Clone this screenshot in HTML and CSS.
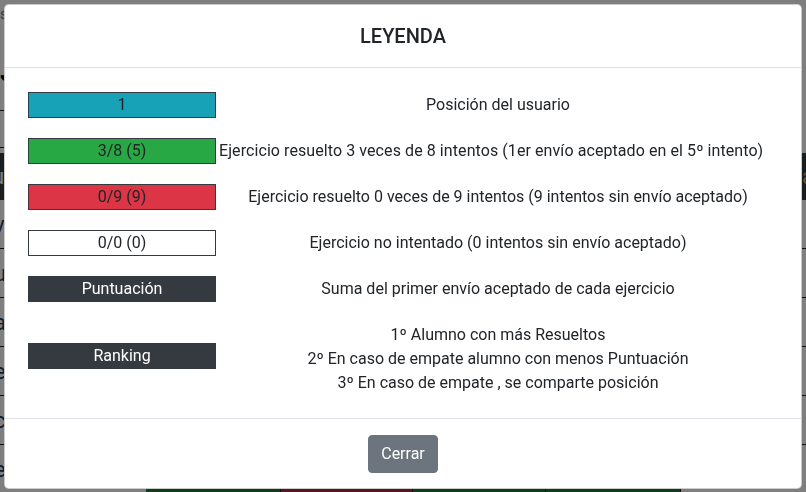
FILE: index.html
```html
<!DOCTYPE html>
<html lang="es">
<head>
<meta charset="utf-8">
<title>Leyenda</title>
<link rel="stylesheet" href="styles.css">
</head>
<body>
<div class="page">
  <div class="page-top">
    <div class="crumb">s</div>
    <div class="page-title">Ju</div>
  </div>
  <div class="short-line"></div>
  <div class="short-line second"></div>
  <div class="thead"><span class="th-l">u</span><span class="th-r">a</span></div>
  <div class="trow"><span>v</span></div>
  <div class="trow"><span>u</span></div>
  <div class="trow"><span>a</span></div>
  <div class="trow"><span>e</span></div>
  <div class="trow"><span>c</span></div>
  <div class="trow"><span>e</span></div>
  <div class="cells">
    <div class="cell c-green"></div>
    <div class="cell c-red"></div>
    <div class="cell c-green"></div>
    <div class="cell c-green"></div>
  </div>
</div>

<div class="backdrop"></div>

<div class="modal">
  <div class="modal-header">
    <h5 class="modal-title">LEYENDA</h5>
  </div>
  <div class="modal-body">
    <div class="legend">
      <div class="box b-info">1</div>
      <div class="desc">Posición del usuario</div>

      <div class="box b-success">3/8 (5)</div>
      <div class="desc wide">Ejercicio resuelto 3 veces de 8 intentos (1er envío aceptado en el 5º intento)</div>

      <div class="box b-danger">0/9 (9)</div>
      <div class="desc">Ejercicio resuelto 0 veces de 9 intentos (9 intentos sin envío aceptado)</div>

      <div class="box b-white">0/0 (0)</div>
      <div class="desc">Ejercicio no intentado (0 intentos sin envío aceptado)</div>

      <div class="box b-dark">Puntuación</div>
      <div class="desc">Suma del primer envío aceptado de cada ejercicio</div>

      <div class="box b-dark">Ranking</div>
      <div class="desc multi">1º Alumno con más Resueltos<br>2º En caso de empate alumno con menos Puntuación<br>3º En caso de empate , se comparte posición</div>
    </div>
  </div>
  <div class="modal-footer">
    <button class="btn" type="button">Cerrar</button>
  </div>
</div>
</body>
</html>
```

FILE: styles.css
```css
* { box-sizing: border-box; }

html, body {
  margin: 0;
  padding: 0;
  width: 806px;
  height: 492px;
  overflow: hidden;
  background: #fff;
  font-family: Roboto, "Liberation Sans", sans-serif;
  color: #212529;
}

/* ---------- page behind the modal ---------- */
.page {
  width: 806px;
  height: 492px;
  overflow: hidden;
}
.page-top {
  height: 110px;
  position: relative;
}
.crumb {
  padding-top: 6px;
  font-size: 14px;
  color: #6c757d;
  line-height: 16px;
}
.page-title {
  margin-top: 36px;
  font-size: 26px;
  font-weight: 700;
  line-height: 28px;
  color: #000;
}
.short-line {
  width: 400px;
  height: 37px;
  border-top: 1px solid #222;
}
.short-line.second {
  height: 6px;
}
.thead {
  height: 47px;
  background: #343a40;
  color: #c8a060;
  display: flex;
  justify-content: space-between;
  align-items: center;
  font-size: 22px;
}
.th-l { margin-left: -8px; color: #fff; }
.th-r { margin-right: -8px; }
.trow {
  height: 49px;
  border-bottom: 1px solid #222;
  display: flex;
  align-items: center;
  font-size: 22px;
  color: #1a3c66;
}
.trow span { margin-left: -6px; }
.cells {
  display: flex;
  margin-top: -6px;
  padding-left: 146px;
  height: 20px;
}
.cell { height: 20px; border-right: 1px solid #222; }
.cell:nth-child(1) { width: 135px; }
.cell:nth-child(2) { width: 132px; }
.cell:nth-child(3) { width: 133px; }
.cell:nth-child(4) { width: 135px; }
.c-green { background: #1f7a34; }
.c-red { background: #b02a37; }

.backdrop {
  position: fixed;
  inset: 0;
  background: rgba(0, 0, 0, 0.5);
}

/* ---------- modal ---------- */
.modal {
  position: fixed;
  top: 4px;
  left: 4px;
  width: 798px;
  height: 485px;
  background: #fff;
  border: 1px solid rgba(0, 0, 0, 0.2);
  border-radius: 5px;
  display: flex;
  flex-direction: column;
  font-size: 16px;
  line-height: 24px;
}
.modal-header {
  height: 63px;
  border-bottom: 1px solid #dee2e6;
  display: flex;
  align-items: center;
  justify-content: center;
}
.modal-title {
  margin: 0;
  font-size: 20px;
  font-weight: 500;
  line-height: 30px;
  color: #212529;
}
.modal-body {
  flex: 1;
  padding: 22px 24px 0 23px;
}
.legend {
  display: grid;
  grid-template-columns: 188px 1fr;
  grid-auto-rows: minmax(30px, auto);
  row-gap: 16px;
  align-items: center;
}
.box {
  height: 26px;
  border: 1px solid #343a40;
  text-align: center;
  line-height: 24px;
  font-size: 16px;
  color: #212529;
}
.b-info { background: #17a2b8; }
.b-success { background: #28a745; }
.b-danger { background: #dc3545; }
.b-white { background: #fff; }
.b-dark { background: #343a40; color: #fff; }
.desc {
  text-align: center;
  padding-left: 3px;
  line-height: 24px;
}
.desc.wide {
  text-align: left;
  white-space: nowrap;
  letter-spacing: 0.08px;
}
.desc.multi {
  padding-top: 3px;
  margin-bottom: -3px;
}
.modal-footer {
  height: 70px;
  border-top: 1px solid #dee2e6;
  display: flex;
  align-items: center;
  justify-content: center;
}
.btn {
  height: 38px;
  padding: 6px 12px;
  font-family: Roboto, "Liberation Sans", sans-serif;
  font-size: 16px;
  line-height: 24px;
  color: #fff;
  background: #6c757d;
  border: 1px solid #6c757d;
  border-radius: 4px;
}
```
